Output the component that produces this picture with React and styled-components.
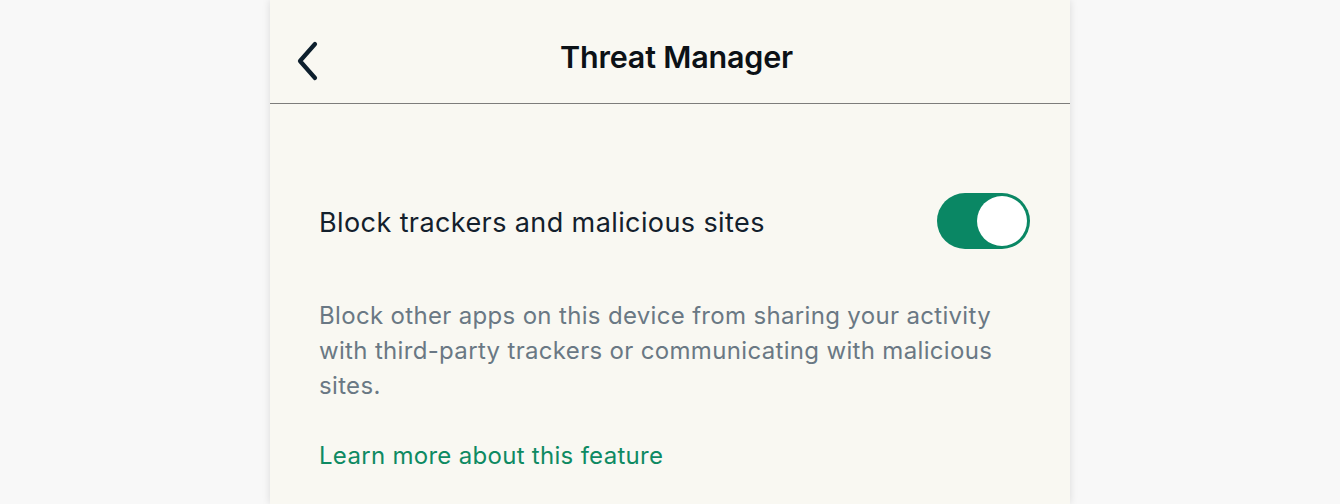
import React from "react";
import styled, { createGlobalStyle } from "styled-components";

const Global = createGlobalStyle`
  html, body { margin: 0; padding: 0; background: #f8f8f8; }
  body { font-family: Inter, "Noto Sans", sans-serif; -webkit-font-smoothing: antialiased; }
`;

const Panel = styled.div`
  width: 800px;
  min-height: 504px;
  margin: 0 auto;
  background: #f9f8f2;
  box-shadow: 0 0 8px rgba(0, 0, 0, 0.12);
`;

const Header = styled.header`
  position: relative;
  height: 103px;
  display: flex;
  align-items: center;
  justify-content: center;
  border-bottom: 1.5px solid #7d7d7b;
`;

const BackButton = styled.button`
  position: absolute;
  left: 20px;
  top: 38px;
  width: 34px;
  height: 46px;
  border: 0;
  padding: 0;
  background: transparent;
  display: flex;
  align-items: center;
  justify-content: center;
`;

const Title = styled.h1`
  margin: 10px 0 0 13px;
  font-size: 30.5px;
  font-weight: 600;
  color: #0c1116;
  letter-spacing: -0.2px;
`;

const Body = styled.main`
  padding: 89px 40px 0 49px;
`;

const Row = styled.div`
  display: flex;
  align-items: center;
  justify-content: space-between;
`;

const Label = styled.span`
  font-size: 27px;
  color: #13202c;
  letter-spacing: 0.4px;
  position: relative;
  top: 1px;
`;

const Switch = styled.div`
  width: 93px;
  height: 56px;
  border-radius: 28px;
  background: ${(p) => (p.$on ? "#0a8764" : "#c8ccd0")};
  display: flex;
  align-items: center;
  justify-content: ${(p) => (p.$on ? "flex-end" : "flex-start")};
  padding: 0 3px;
  box-sizing: border-box;
`;

const Knob = styled.div`
  width: 50px;
  height: 50px;
  border-radius: 50%;
  background: #ffffff;
`;

const Description = styled.p`
  margin: 49px 0 0;
  font-size: 24px;
  line-height: 35px;
  color: #6a7884;
  max-width: 700px;
  letter-spacing: 0.33px;
`;

const LearnLink = styled.a`
  display: block;
  margin-top: 35px;
  font-size: 24px;
  line-height: 35px;
  color: #0e8a62;
  text-decoration: none;
  letter-spacing: 0.3px;
`;

export default function App() {
  return (
    <>
      <Global />
      <Panel>
        <Header>
          <BackButton aria-label="Back">
            <svg width="28" height="42" viewBox="0 0 28 42" fill="none">
              <path d="M22 4 L7 21 L22 38" stroke="#0d1f2d" strokeWidth="4.2" strokeLinecap="round" strokeLinejoin="round" />
            </svg>
          </BackButton>
          <Title>Threat Manager</Title>
        </Header>
        <Body>
          <Row>
            <Label>Block trackers and malicious sites</Label>
            <Switch $on>
              <Knob />
            </Switch>
          </Row>
          <Description>
            Block other apps on this device from sharing your activity with third-party trackers or communicating with malicious sites.
          </Description>
          <LearnLink href="#">Learn more about this feature</LearnLink>
        </Body>
      </Panel>
    </>
  );
}
